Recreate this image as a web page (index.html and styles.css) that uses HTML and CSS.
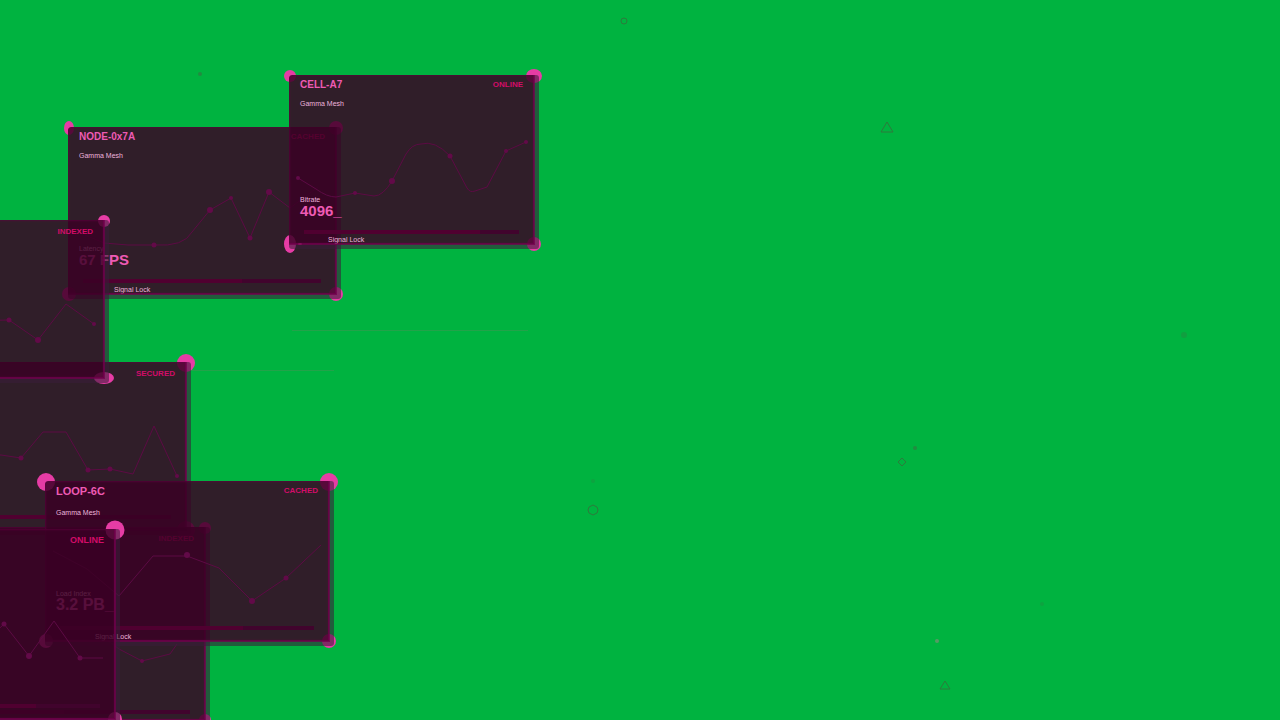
FILE: index.html
```html
<!DOCTYPE html>
<html lang="en">
<head>
<meta charset="utf-8">
<title>Signal Mesh</title>
<link rel="stylesheet" href="styles.css">
</head>
<body>
<main class="stage">
  <svg class="particles" viewBox="0 0 1280 720" aria-hidden="true">
    <g class="outline">
      <circle cx="624" cy="21" r="3"/>
      <path d="M887 122l6 10h-12z"/>
      <path d="M902 458l4 4-4 4-4-4z"/>
      <path d="M593 505l4 2 1 3-1 3-4 2-4-2-1-3 1-3z"/>
      <path d="M945 681l5 8h-10z"/>
    </g>
    <g class="speck">
      <circle cx="200" cy="74" r="2"/><circle cx="915" cy="448" r="2"/>
      <circle cx="593" cy="481" r="2" opacity=".4"/><circle cx="1184" cy="335" r="3" opacity=".5"/>
      <circle cx="1042" cy="604" r="2" opacity=".4"/><circle class="pale" cx="937" cy="641" r="2"/>
    </g>
    <g class="trace"><path d="M292 330.500H528"/><path d="M191 370.500H334"/></g>
  </svg>

  <article class="node node-7a">
    <i class="grip nw"></i><i class="grip ne"></i><i class="grip sw"></i><i class="grip se"></i>
    <div class="panel">
      <svg class="chart" aria-hidden="true"><path d="M17 108L36 116L60 118L86 118Q116 120 124 105L142 83L163 71L182 111L201 65L222 81L250 60"/><circle cx="86" cy="118" r="2.500"/><circle cx="142" cy="83" r="3"/><circle cx="163" cy="71" r="2"/><circle cx="182" cy="111" r="2.500"/><circle cx="201" cy="65" r="3"/></svg>
      <header class="head"><h2 class="title">NODE-0x7A</h2><span class="status">CACHED</span></header>
      <p class="sub">Gamma Mesh</p>
      <p class="label">Latency</p>
      <p class="value">67 FPS</p>
      <div class="bar"><div class="fill" style="width:67%"></div></div>
      <p class="foot">Signal Lock</p>
    </div>
  </article>

  <article class="node node-a7">
    <i class="grip nw"></i><i class="grip ne"></i><i class="grip sw"></i><i class="grip se"></i>
    <div class="panel">
      <svg class="chart" aria-hidden="true"><path d="M9 103L27 114Q38 122 47 122L66 118L85 121Q94 121 103 106L117 79Q123 69 132 69Q146 65 161 81L178 113Q181 118 186 116L198 112L217 76L237 67"/><circle cx="9" cy="103" r="2"/><circle cx="66" cy="118" r="2"/><circle cx="103" cy="106" r="3"/><circle cx="161" cy="81" r="2.500"/><circle cx="217" cy="76" r="2"/><circle cx="237" cy="67" r="2"/></svg>
      <header class="head"><h2 class="title">CELL-A7</h2><span class="status">ONLINE</span></header>
      <p class="sub">Gamma Mesh</p>
      <p class="label">Bitrate</p>
      <p class="value">4096_</p>
      <div class="bar"><div class="fill" style="width:82%"></div></div>
      <p class="foot">Signal Lock</p>
      <i class="led"></i>
    </div>
  </article>

  <article class="node node-secured">
    <i class="grip ne"></i><i class="grip se"></i>
    <div class="panel">
      <svg class="chart" aria-hidden="true"><path d="M80 93L101 93L121 96L143 70H166L188 108L210 107L233 112L254 64L277 114"/><circle cx="121" cy="96" r="2.500"/><circle cx="188" cy="108" r="2.500"/><circle cx="210" cy="107" r="2.500"/><circle cx="277" cy="114" r="2"/></svg>
      <header class="head"><span class="status">SECURED</span></header>
      <div class="bar"><div class="fill" style="width:67%"></div></div>
    </div>
  </article>

  <article class="node node-indexed">
    <i class="grip ne"></i><i class="grip se"></i>
    <div class="panel">
      <svg class="chart" aria-hidden="true"><path d="M130 101L173 100L202 120L230 84L258 104"/><circle cx="173" cy="100" r="2.500"/><circle cx="202" cy="120" r="3"/><circle cx="258" cy="104" r="2"/></svg>
      <header class="head"><span class="status">INDEXED</span></header>
    </div>
  </article>

  <article class="node node-lower">
    <i class="grip ne"></i><i class="grip se"></i>
    <div class="panel">
      <svg class="chart" aria-hidden="true"><path d="M180 110L196 122L219 134L247 127L254 117"/><circle cx="219" cy="134" r="2"/></svg>
      <header class="head"><span class="status">INDEXED</span></header>
      <div class="bar"><div class="fill" style="width:50%"></div></div>
    </div>
  </article>

  <article class="node node-6c">
    <i class="grip nw"></i><i class="grip ne"></i><i class="grip sw"></i><i class="grip se"></i>
    <div class="panel">
      <svg class="chart" aria-hidden="true"><path d="M8 70L42 88L74 115L108 75H142L174 87L207 120L241 97L276 64"/><circle cx="142" cy="74" r="3"/><circle cx="207" cy="120" r="3"/><circle cx="241" cy="97" r="2.500"/></svg>
      <header class="head"><h2 class="title">LOOP-6C</h2><span class="status">CACHED</span></header>
      <p class="sub">Gamma Mesh</p>
      <p class="label">Load Index</p>
      <p class="value">3.2 PB_</p>
      <div class="bar"><div class="fill" style="width:72%"></div></div>
      <p class="foot">Signal Lock</p>
    </div>
  </article>

  <article class="node node-front">
    <i class="grip ne"></i><i class="grip se"></i>
    <div class="panel">
      <svg class="chart" aria-hidden="true"><path d="M150 118L174 95L199 127L224 92L250 129H273"/><circle cx="174" cy="95" r="2.500"/><circle cx="199" cy="127" r="3"/><circle cx="250" cy="129" r="2.500"/></svg>
      <header class="head"><span class="status">ONLINE</span></header>
      <div class="bar"><div class="fill" style="width:75%"></div></div>
    </div>
  </article>
</main>
</body>
</html>
```

FILE: styles.css
```css
* { box-sizing: border-box; }

body {
  margin: 0;
  background: #00b340;
  font-family: "Liberation Sans", Arial, sans-serif;
}

.stage {
  position: relative;
  min-height: 100vh;
  overflow: hidden;
}

.particles {
  position: absolute;
  top: 0;
  left: 0;
  width: 100%;
}
.outline { fill: none; stroke: #2d7a3c; stroke-width: 1; }
.speck { fill: #228c40; }
.pale { fill: #559b64; }
.trace { fill: none; stroke: #22a34a; }

.node {
  --grip: 14px;
  position: absolute;
  display: flex;
  isolation: isolate;
}

.grip {
  position: absolute;
  z-index: -1;
  width: var(--grip);
  height: var(--grip);
  border-radius: 50%;
  background: #e63ca5;
}
.nw { top: 1px; left: 1px; transform: translate(-50%, -50%); }
.ne { top: 1px; right: 5px; transform: translate(50%, -50%); }
.sw { bottom: 5px; left: 1px; transform: translate(-50%, 50%); }
.se { bottom: 5px; right: 5px; transform: translate(50%, 50%); }

.panel {
  position: relative;
  display: flex;
  flex: 1;
  flex-direction: column;
  padding: 3px 11px 0;
  border: solid rgba(58, 30, 58, 0.58);
  border-width: 0 5px 5px 0;
  border-radius: 3px;
  background: rgba(58, 0, 36, 0.83);
  background-clip: padding-box;
  box-shadow: inset 0 0 2px 1px rgba(98, 0, 66, 0.6);
}
.panel::after {
  content: "";
  position: absolute;
  inset: 0 -1px -1px 0;
  border: solid rgba(112, 0, 76, 0.75);
  border-width: 0 2px 2px 0;
  pointer-events: none;
}

.chart {
  position: absolute;
  top: 0;
  left: 0;
  width: 100%;
  height: 100%;
  fill: none;
  stroke: #5c0a44;
  stroke-width: 1;
}
.chart circle { fill: #620a48; stroke: none; }

.head {
  display: flex;
  align-items: center;
  justify-content: space-between;
  height: 13px;
}

.title {
  margin: 0;
  color: #ee5ab4;
  font-size: 10px;
  line-height: 12px;
}

.status {
  margin-left: auto;
  color: #d20c68;
  font-size: 8px;
  font-weight: bold;
  line-height: 13px;
}

.sub, .label, .value, .foot {
  position: relative;
  margin: 0;
  color: #eeb4dc;
  font-size: 7px;
  line-height: 8px;
}
.sub { margin-top: 9px; }
.label { margin-top: auto; }
.value {
  color: #ee5ab4;
  font-size: 15px;
  font-weight: bold;
  line-height: 14px;
}

.bar {
  height: 4px;
  margin: 12px 4px 3px;
  background: #41042d;
}
.fill { height: 100%; background: #500030; }
.foot { margin-left: 28px; }

.led {
  position: absolute;
  left: 9px;
  bottom: -1px;
  width: 4px;
  height: 2px;
  border-radius: 50%;
  background: #c23a8c;
}

.node-7a { top: 127px; left: 68px; width: 273px; height: 172px; }
.node-7a .nw { width: 10px; }
.node-7a .foot { margin-left: 35px; }
.node-a7 { top: 75px; left: 289px; width: 250px; height: 174px; }
.node-a7 .nw { width: 12px; height: 12px; }
.node-a7 .ne { width: 16px; }
.node-a7 .sw { width: 12px; height: 18px; }
.node-a7 .bar { margin-bottom: 2px; }
.node-secured { --grip: 18px; top: 362px; left: -100px; width: 291px; height: 173px; }
.node-indexed { --grip: 12px; top: 220px; left: -164px; width: 273px; height: 163px; }
.node-indexed .se { width: 20px; }
.node-lower { --grip: 12px; top: 527px; left: -77px; width: 287px; height: 198px; }
.node-6c { --grip: 18px; top: 481px; left: 45px; width: 289px; height: 165px; }
.node-6c .se, .node-6c .sw { width: 14px; height: 14px; }
.node-6c .title { font-size: 11px; }
.node-6c .status { line-height: 15px; }
.node-6c .sub { margin-top: 12px; }
.node-6c .value { font-size: 16px; }
.node-6c .label { line-height: 9px; }
.node-6c .bar { margin-top: 14px; }
.node-6c .foot { margin-left: 39px; }
.node-front { --grip: 19px; top: 529px; left: -170px; width: 290px; height: 195px; }
.node-front .se { width: 14px; height: 14px; }
.node-front .status { font-size: 9px; }
.node-secured .bar, .node-lower .bar, .node-front .bar { margin-top: auto; margin-bottom: 11px; }
.node-lower .bar { margin-bottom: 6px; }
.node-secured .head, .node-lower .head, .node-front .head, .node-indexed .head { height: 16px; }
```
